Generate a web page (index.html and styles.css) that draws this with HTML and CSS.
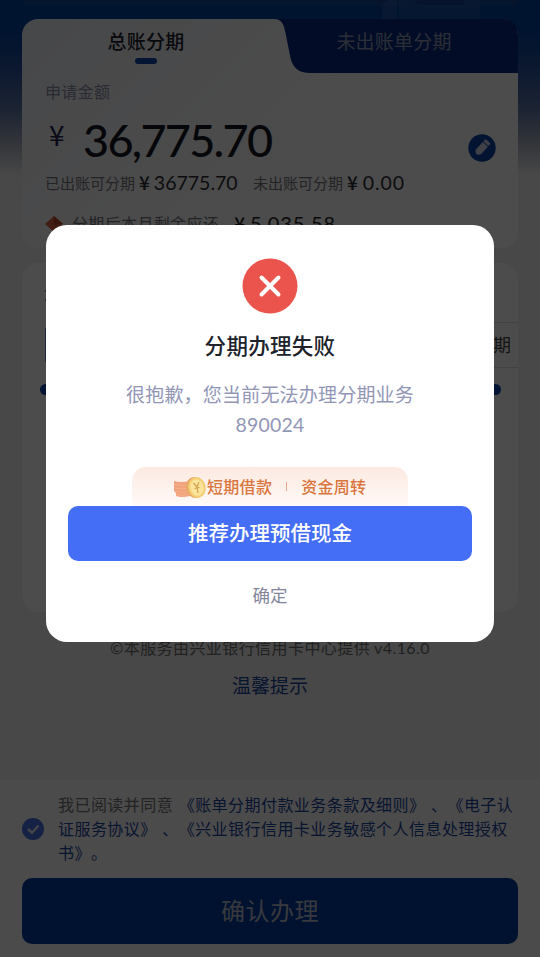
FILE: index.html
```
<!DOCTYPE html>
<html lang="zh-CN">
<head>
  <meta charset="UTF-8">
  <meta name="viewport" content="width=device-width, initial-scale=1.0">
  <title>账单分期</title>
  <link rel="stylesheet" href="styles.css">
</head>
<body>
  <div class="page">
    <div class="banner">
      <div class="banner-strip"></div>
      <svg class="banner-art" width="100" height="20" viewBox="0 0 100 20">
        <path d="M0 20 L2 6 Q3 0 8 0 H16 V20Z" fill="#3f68b4" opacity=".45"/>
        <path d="M18 0 H99 V20 H18Z" fill="#3f68b4" opacity=".35"/>
        <path d="M34 0 H83 V5 H38 Q34 5 34 0Z" fill="#0a3689" opacity=".6"/>
      </svg>
    </div>

    <div class="card amount-card">
      <div class="tabs">
        <svg class="tab-shape" width="236" height="54" viewBox="0 0 236 54">
          <path d="M0 0 H220 Q236 0 236 16 V54 H28 C17 54 11 49 8.500 39 L3.500 14 C2 6 0 0 -8 0Z" fill="#0a2b80"/>
        </svg>
        <div class="tab active">总账分期</div>
        <div class="tab">未出账单分期</div>
      </div>
      <div class="amount-body">
        <div class="label">申请金额</div>
        <div class="amount">
          <span class="yen">¥</span><span class="num">36,775.70</span>
          <svg class="edit" width="28" height="28" viewBox="0 0 28 28">
            <circle cx="14" cy="14" r="13.700" fill="#0d43ac"/>
            <g transform="rotate(42 14 14)" fill="#d3daec">
              <rect x="10.500" y="5" width="7" height="3.200" rx="1.200"/>
              <path d="M10.500 9 H17.500 V19 Q17.500 20 16.500 20.800 L15 22 Q14 22.700 13 22 L11.500 20.800 Q10.500 20 10.500 19Z"/>
            </g>
          </svg>
        </div>
        <div class="limits">
          <span class="limit-name">已出账可分期</span><span class="limit-num one"><b>¥</b>36775.70</span>
          <span class="limit-name">未出账可分期</span><span class="limit-num two"><b>¥</b>0.00</span>
        </div>
        <div class="remain">
          <svg width="20" height="18" viewBox="0 0 20 18">
            <path d="M0 9 L9 1 L18 9 L9 17Z" fill="#e26840"/>
            <path d="M9 1 L18 9 L9 10Z" fill="#b9472c"/>
          </svg>
          <span class="remain-name">分期后本月剩余应还</span><span class="remain-num"><b>¥</b>5,035.58</span>
        </div>
      </div>
    </div>

    <div class="card period-card">
      <div class="period-title"></div>
      <div class="periods">
        <div class="period selected"></div>
        <div class="period">期</div>
      </div>
      <div class="dots"><i></i><i></i></div>
    </div>

    <div class="copyright">©本服务由兴业银行信用卡中心提供 <span>v4.16.0</span></div>
    <a class="tips">温馨提示</a>

    <div class="bottom">
      <div class="agree">
        <svg width="22" height="22" viewBox="0 0 22 22">
          <circle cx="11" cy="11" r="11" fill="#4770e6"/>
          <path d="M6 11 L10 14.700 L16.500 7.500" fill="none" stroke="#e8e8ee" stroke-width="2.400"/>
        </svg>
        <p>我已阅读并同意 <a>《账单分期付款业务条款及细则》</a> <a>、</a><a>《电子认<br>证服务协议》</a> <a>、</a><a>《兴业银行信用卡业务敏感个人信息处理授权<br>书》</a><a>。</a></p>
      </div>
      <button class="confirm">确认办理</button>
    </div>
  </div>

  <div class="mask">
    <div class="dialog">
      <svg class="fail" width="56" height="56" viewBox="0 0 56 56">
        <circle cx="28" cy="28" r="27.500" fill="#eb544c"/>
        <path d="M19.500 19.500 L36.500 36.500 M36.500 19.500 L19.500 36.500" stroke="#fff" stroke-width="4" stroke-linecap="round"/>
      </svg>
      <h2>分期办理失败</h2>
      <p class="message">很抱歉，您当前无法办理分期业务<br><span>890024</span></p>
      <div class="promo">
        <svg width="34" height="24" viewBox="0 0 34 24">
          <path d="M1 5 Q8 7 17 5 V20 Q8 22 3 20 V17 L1 15Z" fill="#f2a27c"/>
          <path d="M1 8.500 Q8 10 17 8.500 M1 12 Q8 13.500 17 12 M2 15.500 Q8 17 17 15.500 M3 18.500 Q8 20 17 18.500" fill="none" stroke="#f4b48c" stroke-width="1"/>
          <ellipse cx="21.500" cy="11.500" rx="8.500" ry="10.500" fill="#e6a968" transform="rotate(-12 21.500 11.500)"/>
          <ellipse cx="24" cy="11.500" rx="8.700" ry="10.500" fill="#f4ce74" transform="rotate(-12 24 11.500)"/>
          <ellipse cx="24" cy="11.500" rx="6.600" ry="8.400" fill="#fae49c" transform="rotate(-12 24 11.500)"/>
          <path d="M20.500 7 L24 11 L26 6 M24 11 L25 17 M21.500 12.500 L26.500 11.500" fill="none" stroke="#d5a04c" stroke-width="1.200"/>
        </svg>
        <span>短期借款</span><i></i><span>资金周转</span>
      </div>
      <button class="primary">推荐办理预借现金</button>
      <button class="cancel">确定</button>
    </div>
  </div>
</body>
</html>
```
FILE: styles.css
```
* {
  box-sizing: border-box;
}
body {
  margin: 0;
  height: 957px;
  overflow: hidden;
  font-family: "Noto Sans CJK SC", sans-serif;
  background: #f0f0f0;
}
h2, p {
  margin: 0;
}
button {
  display: block;
  border: none;
  padding: 0;
  font-family: inherit;
}
.page {
  height: 957px;
  display: flex;
  flex-direction: column;
  background: linear-gradient(#03409f 0, #03409f 30px, #29539f 70px, #6079a9 110px, #a3abbd 140px, #f0f0f0 175px);
}

/* top */
.banner {
  height: 19px;
  padding: 0 22px;
  position: relative;
  flex: none;
}
.banner-strip {
  height: 6px;
  background: #12489c;
  border-radius: 0 0 8px 8px;
}
.banner-art {
  position: absolute;
  left: 381px;
  top: 0;
}
.card {
  margin: 0 22px;
  background: #fff;
  border-radius: 16px;
  flex: none;
}
.amount-card {
  height: 229px;
  background: linear-gradient(135deg, #edf0f5 0, #fcfcfd 45%, #fff 100%);
}
.tabs {
  display: flex;
  height: 54px;
  position: relative;
}
.tab-shape {
  position: absolute;
  right: 0;
  top: 0;
  overflow: visible;
}
.tab {
  position: relative;
  width: 248px;
  line-height: 44px;
  text-align: center;
  font-size: 19px;
  letter-spacing: 0.2px;
  color: #8f9bb8;
}
.tab.active {
  font-weight: 500;
  color: #20222f;
}
.tab.active::after {
  content: "";
  position: absolute;
  left: 113px;
  top: 39px;
  width: 22px;
  height: 6px;
  border-radius: 3px;
  background: #0f46ad;
}
.amount-body {
  padding: 6px 22px 0 23px;
}
.label {
  font-size: 16px;
  line-height: 24px;
  letter-spacing: 0.3px;
  color: #8d8da8;
}
.amount {
  display: flex;
  height: 67px;
  align-items: center;
  color: #171826;
  line-height: 67px;
}
.yen {
  width: 38px;
  padding: 0 0 4px 4px;
  font-size: 28px;
  color: #22264d;
}
.num {
  flex: 1;
  padding-top: 7px;
  font-family: Lato, "Noto Sans CJK SC", sans-serif;
  font-size: 45px;
  font-weight: 500;
  letter-spacing: -1.7px;
}
.edit {
  margin-top: 23px;
}
.limits {
  display: flex;
  line-height: 28px;
  margin-top: -1px;
}
.limit-name {
  font-size: 15px;
  color: #77777d;
}
.limit-num {
  padding-left: 4px;
  font-family: Lato, "Noto Sans CJK SC", sans-serif;
  font-size: 19.5px;
  color: #2d2d33;
}
.limit-num.one {
  width: 118px;
}
.limit-num.two {
  letter-spacing: 0.9px;
}
.limit-num b, .remain-num b {
  margin-right: 4px;
  font-family: "Noto Sans CJK SC", sans-serif;
  font-size: 19px;
  font-weight: 500;
  line-height: 20px;
}
.remain {
  display: flex;
  align-items: center;
  margin-top: 11px;
  line-height: 30px;
}
.remain svg {
  margin-top: 2px;
}
.remain-name {
  margin-left: 7px;
  font-size: 16px;
  letter-spacing: 0.35px;
  color: #77777d;
}
.remain-num {
  margin-left: 15px;
  font-family: Lato, "Noto Sans CJK SC", sans-serif;
  font-size: 20px;
  letter-spacing: 0.9px;
  color: #222;
}

/* periods */
.period-card {
  height: 349px;
  margin-top: 15px;
  padding-top: 27px;
}
.period-title {
  width: 2px;
  height: 11px;
  margin-left: 23px;
  border-top: 2px solid #888;
  border-bottom: 2px solid #888;
}
.periods {
  display: flex;
  justify-content: space-between;
  align-items: center;
  margin-top: 21px;
  padding-left: 23px;
}
.period {
  width: 100px;
  height: 46px;
  line-height: 43px;
  padding-right: 7px;
  border-top: 1px solid #ddd;
  border-bottom: 1px solid #ddd;
  text-align: right;
  font-size: 18px;
  color: #444;
}
.period.selected {
  height: 34px;
  border: 2px solid #7490c8;
  background: #c3d0ea;
}
.dots {
  display: flex;
  justify-content: space-between;
  padding: 16px 17px 0 18px;
}
.dots i {
  width: 11px;
  height: 11px;
  border-radius: 50%;
  background: #0f43ad;
}

.copyright {
  margin-top: 23px;
  text-align: center;
  font-size: 16px;
  line-height: 24px;
  letter-spacing: 0.42px;
  color: #6f6f6f;
}
.copyright span {
  font-family: Lato, sans-serif;
  font-size: 16px;
}
.tips {
  margin-top: 10px;
  text-align: center;
  font-size: 19px;
  line-height: 30px;
  color: #1d479f;
}

/* bottom bar */
.bottom {
  margin-top: auto;
  height: 177px;
  padding: 12px 22px 0;
  background: #fafafa;
}
.agree {
  display: flex;
  align-items: center;
  height: 72px;
}
.agree svg {
  flex: none;
  margin: 1px 14px 0 0;
}
.agree p {
  font-size: 16px;
  line-height: 24px;
  letter-spacing: 0.45px;
  word-spacing: 1.5px;
  white-space: nowrap;
  text-spacing-trim: space-all;
  color: #777;
}
.agree a {
  color: #1d479f;
}
.confirm {
  width: 100%;
  height: 66px;
  margin-top: 14px;
  padding-bottom: 3px;
  border-radius: 10px;
  background: #003c9f;
  font-size: 24px;
  letter-spacing: 0.5px;
  color: #b8bfd0;
}

/* dialog */
.mask {
  position: fixed;
  inset: 0;
  padding-top: 225px;
  background: rgba(0, 0, 0, 0.7);
}
.dialog {
  width: 448px;
  height: 416.500px;
  margin: 0 auto;
  padding: 33px 22px 0;
  background: #fff;
  border-radius: 21px;
  display: flex;
  flex-direction: column;
  align-items: center;
}
.fail {
  flex: none;
}
.dialog h2 {
  margin-top: 14px;
  font-size: 21.5px;
  line-height: 34px;
  font-weight: 500;
  letter-spacing: 0.3px;
  color: #20222b;
}
.message {
  margin-top: 17px;
  text-align: center;
  font-size: 19px;
  line-height: 30px;
  letter-spacing: 0.2px;
  color: #9296b6;
}
.message span {
  font-family: Lato, sans-serif;
  font-size: 19.5px;
  line-height: 20px;
}
.promo {
  width: 276px;
  height: 39px;
  margin-top: 28px;
  padding: 0 0 1px 41px;
  display: flex;
  align-items: center;
  border-radius: 14px 14px 0 0;
  background: linear-gradient(#fce9e1, #fffaf8);
  font-size: 16px;
  font-weight: 500;
  letter-spacing: 0.3px;
  color: #d9763d;
}
.promo svg {
  margin-top: 4px;
}
.promo i {
  width: 1px;
  height: 9px;
  margin: 0 14px;
  background: #e0a585;
}
.primary {
  width: 404px;
  height: 55px;
  flex: none;
  padding-bottom: 3px;
  border-radius: 10px;
  background: #446ef5;
  color: #fff;
  font-size: 20.5px;
  font-weight: 500;
}
.cancel {
  margin-top: 19px;
  background: none;
  font-size: 17.5px;
  line-height: 30px;
  color: #83859a;
}
```
